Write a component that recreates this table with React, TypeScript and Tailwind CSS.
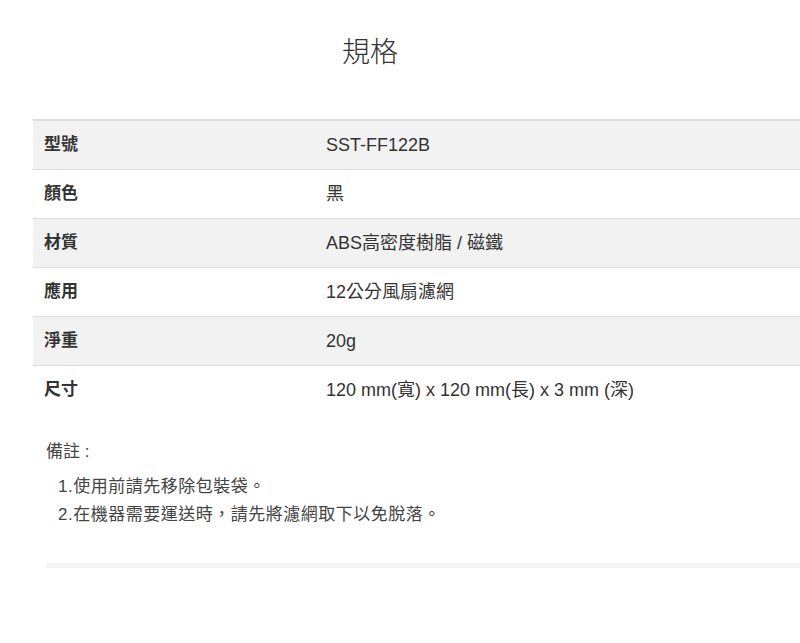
const specs = [
  { label: '型號', value: 'SST-FF122B' },
  { label: '顏色', value: '黑' },
  { label: '材質', value: 'ABS高密度樹脂 / 磁鐵' },
  { label: '應用', value: '12公分風扇濾網' },
  { label: '淨重', value: '20g' },
  { label: '尺寸', value: '120 mm(寬) x 120 mm(長) x 3 mm (深)' },
];

export default function App() {
  return (
    <div
      className="w-[800px] h-[643px] overflow-hidden bg-white text-[#333]"
      style={{ fontFamily: '"Liberation Sans", "Noto Sans CJK TC", sans-serif' }}
    >
      {/* Title */}
      <h2 className="pt-[36px] h-[119px] text-center text-[28px] font-light leading-[34px] pr-[60px]">
        規格
      </h2>

      {/* Spec table */}
      <div className="ml-[33px]">
        {specs.map((row, i) => (
          <div
            key={row.label}
            className={`flex h-[49px] items-center border-t border-[#ddd] ${
              i % 2 === 0 ? 'bg-[#f2f2f2]' : 'bg-white'
            } ${i === 0 ? 'border-t-2 h-[50px]' : ''}`}
          >
            <div className="w-[293px] pl-[11px] text-[17px] font-semibold text-[#333]">{row.label}</div>
            <div className="text-[18px] text-[#333]">{row.value}</div>
          </div>
        ))}
      </div>

      {/* Notes */}
      <div className="ml-[46px] mt-[24px] text-[17px] leading-[28px] text-[#444]">
        <p>備註 :</p>
        <ol className="mt-[7px] ml-[12px] tracking-[0.5px]">
          <li>1.使用前請先移除包裝袋。</li>
          <li>2.在機器需要運送時，請先將濾網取下以免脫落。</li>
        </ol>
        <div className="mt-[34px] h-[5px] bg-[#f5f5f5]" />
      </div>
    </div>
  );
}
